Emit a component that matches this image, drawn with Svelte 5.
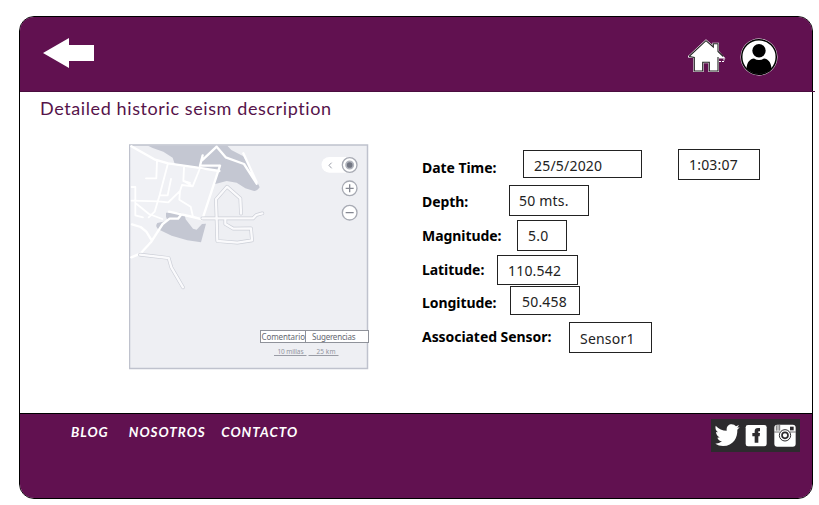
<script>
  const rows = [
    { label: 'Date Time:', height: 34, fields: [
      { text: '25/5/2020', left: 101, top: 0, w: 119, h: 28, pad: 11, ty: 2 },
      { text: '1:03:07', left: 36, top: -1, w: 82, h: 31, pad: 11, ty: 2 }
    ] },
    { label: 'Depth:', height: 34, fields: [{ text: '50 mts.', left: 87, top: 1, w: 80, h: 31, pad: 10, ty: 2 }] },
    { label: 'Magnitude:', height: 34, fields: [{ text: '5.0', left: 95, top: 2, w: 50, h: 31, pad: 11, ty: 2 }] },
    { label: 'Latitude:', height: 33, fields: [{ text: '110.542', left: 75, top: 3, w: 81, h: 30, pad: 11, ty: 2 }] },
    { label: 'Longitude:', height: 34, fields: [{ text: '50.458', left: 88, top: 1, w: 70, h: 29, pad: 12, ty: 2 }] },
    { label: 'Associated Sensor:', height: 34, fields: [{ text: 'Sensor1', left: 147, top: 3, w: 83, h: 31, pad: 11, ty: 3 }] }
  ];
  const links = ['BLOG', 'NOSOTROS', 'CONTACTO'];
</script>

<div class="page">
  <div class="frame">
    <header>
      <svg class="back" width="52" height="31" viewBox="0 0 52 31"><path fill="#fff" d="M0 15 26 0V7H51V23H26V30Z" /></svg>
      <div class="actions">
        <svg class="home" width="38" height="34" viewBox="0 0 38 34">
          <path d="M1 17.500 18 1.700 25.300 8V4.700H30V12.500L35.300 18.500H30V32H21.300V23.300H14.700V32H6.300V18Z" fill="#fff" stroke="#fff" stroke-width="2" />
          <path d="M1 17.500 18 1.700 25.300 8V4.700H30V12.500L35.300 17.500M30 18V32H21.300V23.300H14.700V32H6.300V18.500L1.500 17.500" fill="#fff" stroke="#222" stroke-width="1.100" />
          <path d="M31 22.500H36V19" fill="none" stroke="#fff" stroke-dasharray="2 1" />
        </svg>
        <svg width="38" height="38" viewBox="0 0 38 38">
          <circle cx="19" cy="19" r="18.500" fill="#fff" />
          <circle cx="19" cy="19" r="17.300" fill="#fff" stroke="#000" stroke-width="1.500" />
          <circle cx="19" cy="12.700" r="6.700" />
          <path d="M6.500 30.500C7 24 10 21 14 20.500Q19 23.500 24 20.500C28 21 31 24 31.500 30.500Q26 36 19 36T6.500 30.500Z" />
        </svg>
      </div>
    </header>

    <main>
      <h1>Detailed historic seism description</h1>
      <div class="content">
        <svg class="map" width="241" height="226" viewBox="129 144 241 226">
          <rect x="129.500" y="145" width="238" height="223.500" fill="#eeeff3" stroke="#bfc2cd" stroke-width="1.500" />
          <g transform="translate(120 135) scale(.333333)" fill="none" stroke-linejoin="round" stroke-linecap="round">
            <path fill="#f0f1f5" d="M32 34 103 73 298 105 247 255 147 232 96 318 62 355 34 365Z" />
            <path fill="#c4c7d2" d="M84 32H322L334 45 370 64 396 108 419 157Q412 168 402 168L376 160 350 143 320 138 283 148 296 107 240 103 228 96 164 86 158 68 130 50 98 39Z" />
            <path fill="#c4c7d2" d="M138 233H180L194 240 197 253 219 281 230 284 246 267 258 266 243 322 202 316 155 302 121 286Q102 276 112 264L143 257 138 245Z" />
            <g stroke="#fff">
              <path stroke-width="7" d="M34 34 103 73 144 85 228 97 298 108M300 92 247 253 219 246 147 230M298 92H240L248 61M246 76 290 35 317 67 372 87 410 146M370 55 410 142" />
              <path stroke-width="5.500" d="M111 77 109 130H78M144 85 119 180 104 230 86 247M119 181H143L153 132M192 98 190 138 210 144M239 102 218 154 186 150 180 168 178 194 212 215 219 246M146 201 178 170M35 156H46V241L69 247M35 197 116 199 145 202M50 207 87 237 127 252M190 137 218 154" />
              <path stroke-width="7" d="M34 367 62 355 94 320 128 267 149 251H174L183 240M36 268 62 276 79 290 95 316" />
            </g>
            <g stroke="#cccfd7" stroke-width="11">
              <path d="M247 250H399L409 240 427 235M363 236 361 190 321 155 288 193 292 318 352 323 396 316 393 280 340 281 316 267V255M60 359 146 369 154 397 189 457" />
            </g>
            <g stroke="#fafafc" stroke-width="7">
              <path d="M247 250H399L409 240 427 235M363 236 361 190 321 155 288 193 292 318 352 323 396 316 393 280 340 281 316 267V255M60 359 146 369 154 397 189 457" />
            </g>
          </g>
          <g transform="translate(240 135) scale(.333333)" fill="none">
            <path fill="#fff" d="M268 66H328V113H268A23.500 23.500 0 0 1 268 66Z" />
            <path d="m275 83-8 8 8 9" stroke="#9c9faa" stroke-width="3" />
            <g fill="#fff" stroke="#a7aab3" stroke-width="4"><circle cx="329" cy="90" r="22" /><circle cx="329" cy="160" r="22" /><circle cx="329" cy="233" r="22" /></g>
            <circle cx="329" cy="90" r="11" fill="#737783" stroke="#b2b5bd" stroke-width="5" />
            <path d="M317 160H341M329 148V172M317 233H341" stroke="#858892" stroke-width="4" />
          </g>
          <rect x="260.500" y="330.500" width="108" height="12" fill="#fff" stroke="#8f929a" />
          <path d="M305.500 331V342" stroke="#8f929a" />
          <path d="M274 355.500H306.500M308.500 355.500H338.500" stroke="#999ca5" />
          <g font-family="Noto Sans, sans-serif" fill="#656871">
            <text x="261.500" y="340" font-size="8" textLength="43.500">Comentario</text>
            <text x="312" y="340" font-size="8" textLength="43.500">Sugerencias</text>
            <g fill="#92959e" font-size="6.500"><text x="277.500" y="353.500" textLength="26">10 millas</text><text x="316.500" y="353.500" textLength="19">25 km</text></g>
          </g>
        </svg>

        <div class="details">
          {#each rows as row}
            <div class="row" style:height="{row.height}px">
              <span class="label" style:width="{row.fields[0].left}px">{row.label}</span>
              {#each row.fields as f, i}
                <div class="field" style:margin-left="{i ? f.left : 0}px" style:margin-top="{f.top}px" style:width="{f.w}px" style:height="{f.h}px" style:padding="{f.ty}px 0 0 {f.pad - 1}px">{f.text}</div>
              {/each}
            </div>
          {/each}
        </div>
      </div>
    </main>

    <footer>
      <nav>{#each links as link}<span>{link}</span>{/each}</nav>
      <svg width="89" height="33" viewBox="0 0 89 33">
        <rect width="89" height="33" fill="#2d2b2e" />
        <g transform="translate(-21.330 -18.330) scale(.333333)" fill="#fff">
          <path d="M78 75Q92 90 111 90C110 76 118 71 126 71Q134 71 139 77L148 73 143 81 150 80 143 87C144 109 132 136 100 136Q87 136 77 129 89 129 97 122 86 120 83 111L90 110Q80 106 79 94L85 95Q75 87 78 75Z" />
          <rect x="168" y="73" width="63" height="64" rx="7" />
          <path fill="#2d2b2e" d="M195 126V107H188V97H195V91Q195 82 205 82H211V92H206V97H211L210 107H206V126Z" />
          <rect x="254" y="72" width="64" height="66" rx="9" />
          <path stroke="#2d2b2e" stroke-width="2" d="M254 94H270M300 94H318M260 74V90M265 73V90M270 73V90" />
          <rect x="301" y="78" width="11" height="11" fill="#2d2b2e" />
          <circle cx="286" cy="104" r="17" stroke="#2d2b2e" stroke-width="3" />
          <circle cx="286" cy="104" r="9" stroke="#2d2b2e" stroke-width="5" />
        </g>
      </svg>
    </footer>
  </div>
</div>

<style>
  :global(body) { background: #fff; overflow: hidden; }
  .page { width: 819px; height: 505px; padding: 16px 0 0 19px; box-sizing: border-box; }
  .frame { width: 794px; height: 483px; box-sizing: border-box; border: 1px solid #000; border-radius: 15px; display: flex; flex-direction: column; background: #fff; }
  header { position: relative; height: 75px; flex: none; box-sizing: border-box; background: #611150; border-radius: 14px 14px 0 0; padding: 21px 34px 0 23px; display: flex; justify-content: space-between; align-items: flex-start; }
  header::after { content: ''; position: absolute; left: 0; right: -3px; bottom: 0; height: 1px; background: #4a0d3e; }
  .actions { display: flex; gap: 14px; align-items: flex-start; }
  .home { margin-top: 1px; }
  svg { display: block; flex: none; }
  main { flex: 1; min-height: 0; }
  h1 { margin: 4px 0 0 20px; height: 24px; font: 400 18px/24px Lato, sans-serif; letter-spacing: .6px; color: #56134a; white-space: nowrap; }
  .content { display: flex; padding: 24px 0 0 109px; }
  .details { margin: 6px 0 0 52px; }
  .row { display: flex; align-items: flex-start; }
  .label { flex: none; font: 700 14px/20px "Noto Sans", sans-serif; letter-spacing: -.06px; padding-top: 8px; white-space: nowrap; color: #000; }
  .field { flex: none; box-sizing: border-box; border: 1px solid #222; background: #fff; font: 400 14px/26px "Noto Sans", sans-serif; letter-spacing: .2px; color: #222; white-space: nowrap; }
  footer { height: 85px; flex: none; box-sizing: border-box; background: #611150; border-top: 1px solid #000; border-radius: 0 0 14px 14px; padding: 5px 12px 0 51px; display: flex; justify-content: space-between; }
  nav { display: flex; font: italic 700 13.5px/26px Lato, sans-serif; letter-spacing: 1px; color: #fff; }
  nav span { margin-right: 15.5px; }
  nav span:first-child { margin-right: 20px; }
</style>
